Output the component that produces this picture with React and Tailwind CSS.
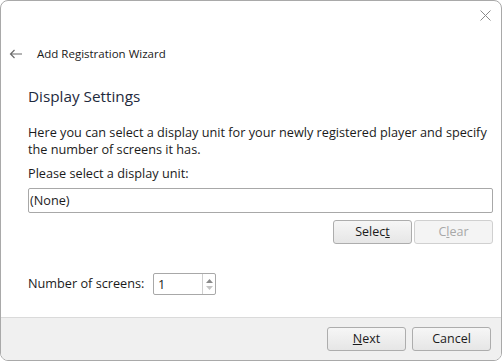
import React from "react";

const font = { fontFamily: '"Open Sans", "Noto Sans", sans-serif' };

function Btn({ children, disabled, className = "" }) {
  return (
    <div
      className={
        "w-[79px] h-[24px] flex items-center justify-center rounded-[3px] border text-[12.5px] " +
        (disabled
          ? "border-[#d0d0d0] bg-[#f4f4f4] text-[#a8a8a8] "
          : "border-[#adadad] bg-gradient-to-b from-[#f6f6f6] to-[#e6e6e6] text-[#1b1b1b] ") +
        className
      }
    >
      {children}
    </div>
  );
}

export default function App() {
  return (
    <div className="w-[502px] h-[361px] bg-white" style={font}>
      <div className="w-[502px] h-[361px] border border-[#a9a9a9] rounded-[8px] bg-white flex flex-col overflow-hidden">
        {/* title bar */}
        <div className="h-[34px] flex justify-end items-start pt-[9px] pr-[10px]">
          <svg width="11" height="11" viewBox="0 0 11 11">
            <path d="M0.5 0.5 L10.5 10.5 M10.5 0.5 L0.5 10.5" stroke="#8a8a8a" strokeWidth="1" fill="none" />
          </svg>
        </div>
        {/* header */}
        <div className="h-[40px] flex items-center pl-[8px] -mt-[1px]">
          <svg width="14" height="10" viewBox="0 0 14 10">
            <path d="M13 5 H1.5 M5.5 1 L1.5 5 L5.5 9" stroke="#6a6a6a" strokeWidth="1.2" fill="none" />
          </svg>
          <span className="ml-[14px] text-[11.5px] text-[#1a1a1a]">Add Registration Wizard</span>
        </div>
        <div className="flex-1 px-[27px] flex flex-col">
          <div className="mt-[12px] text-[15.3px] leading-[20px] text-[#1e2a3c]">Display Settings</div>
          <div className="mt-[18px] text-[12.7px] leading-[17px] text-[#1b1b1b] whitespace-nowrap">
            <div>Here you can select a display unit for your newly registered player and specify</div>
            <div>the number of screens it has.</div>
          </div>
          <div className="mt-[7px] text-[12.7px] leading-[17px] text-[#1b1b1b]">Please select a display unit:</div>
          <div className="mt-[6px] h-[25px] border border-[#a8a8a8] rounded-[2px] flex items-center pl-[1px] text-[12.7px] text-[#1b1b1b] w-[465px]">
            (None)
          </div>
          <div className="mt-[7px] flex justify-end gap-[2px] w-[465px]">
            <Btn>
              Selec<span className="underline">t</span>
            </Btn>
            <Btn disabled>
              C<span className="underline">l</span>ear
            </Btn>
          </div>
          <div className="mt-[29px] flex items-center text-[12.7px] text-[#1b1b1b]">
            <span className="w-[125px]">Number of screens:</span>
            <div className="w-[63px] h-[22px] border border-[#a8a8a8] rounded-[2px] flex">
              <span className="flex-1 pl-[4px] leading-[20px]">1</span>
              <div className="w-[13px] border-l border-[#cfcfcf] flex flex-col items-center justify-center gap-[3px]">
                <svg width="7" height="4" viewBox="0 0 7 4"><path d="M0 4 L3.5 0 L7 4 Z" fill="#8a8a8a" /></svg>
                <svg width="7" height="4" viewBox="0 0 7 4"><path d="M0 0 L3.5 4 L7 0 Z" fill="#c4c4c4" /></svg>
              </div>
            </div>
          </div>
        </div>
        {/* footer */}
        <div className="h-[43px] border-t border-[#dadada] bg-[#f0f0f0] flex items-center justify-end pr-[10px] gap-[6px]">
          <Btn>
            <span className="underline">N</span>ext
          </Btn>
          <Btn>Cancel</Btn>
        </div>
      </div>
    </div>
  );
}
